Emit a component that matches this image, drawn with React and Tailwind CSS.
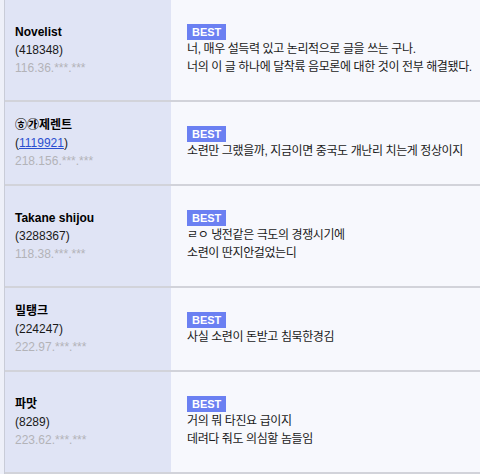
const comments = [
  {
    name: 'Novelist',
    id: '418348',
    ip: '116.36.***.***',
    lines: ['너, 매우 설득력 있고 논리적으로 글을 쓰는 구나.', '너의 이 글 하나에 달착륙 음모론에 대한 것이 전부 해결됐다.'],
  },
  {
    name: '㉭㉮제렌트',
    id: '1119921',
    link: true,
    ip: '218.156.***.***',
    lines: ['소련만 그랬을까, 지금이면 중국도 개난리 치는게 정상이지'],
  },
  {
    name: 'Takane shijou',
    id: '3288367',
    ip: '118.38.***.***',
    lines: ['ㄹㅇ 냉전같은 극도의 경쟁시기에', '소련이 딴지안걸었는디'],
  },
  {
    name: '밀탱크',
    id: '224247',
    ip: '222.97.***.***',
    lines: ['사실 소련이 돈받고 침묵한경김'],
  },
  {
    name: '파맛',
    id: '8289',
    ip: '223.62.***.***',
    lines: ['거의 뭐 타진요 급이지', '데려다 줘도 의심할 놈들임'],
  },
];

const App = () => {
  return (
    <div className="w-[480px] h-[474px] overflow-hidden bg-[#eef0f9] pl-[4px] font-['Liberation_Sans','Noto_Sans_CJK_KR',sans-serif] text-[12px] leading-[18px] text-[#1a1a1a]">
      <div className="border-l border-[#c9ccd8]">
        {comments.map((c, i) => (
          <div key={i} className="flex border-b-2 border-[#d2d3da]">
            <div className="w-[166px] shrink-0 bg-[#e0e4f5] pl-[10px] flex flex-col justify-center">
              <div className="font-bold text-black">{c.name}</div>
              <div>
                (
                {c.link ? (
                  <span className="text-[#2b4fd0] underline">{c.id}</span>
                ) : (
                  c.id
                )}
                )
              </div>
              <div className="text-[#b3b3b8]">{c.ip}</div>
            </div>
            <div className="flex-1 bg-[#f7f8fd] pl-[16px] py-[24px]">
              <div className="flex">
                <span className="h-[16px] px-[5px] bg-[#6b80f2] text-white font-bold text-[11px] leading-[16px]">
                  BEST
                </span>
              </div>
              {c.lines.map((l, j) => (
                <div key={j} className="whitespace-nowrap tracking-[-0.4px]">{l}</div>
              ))}
            </div>
          </div>
        ))}
      </div>
    </div>
  );
};

export default App;
